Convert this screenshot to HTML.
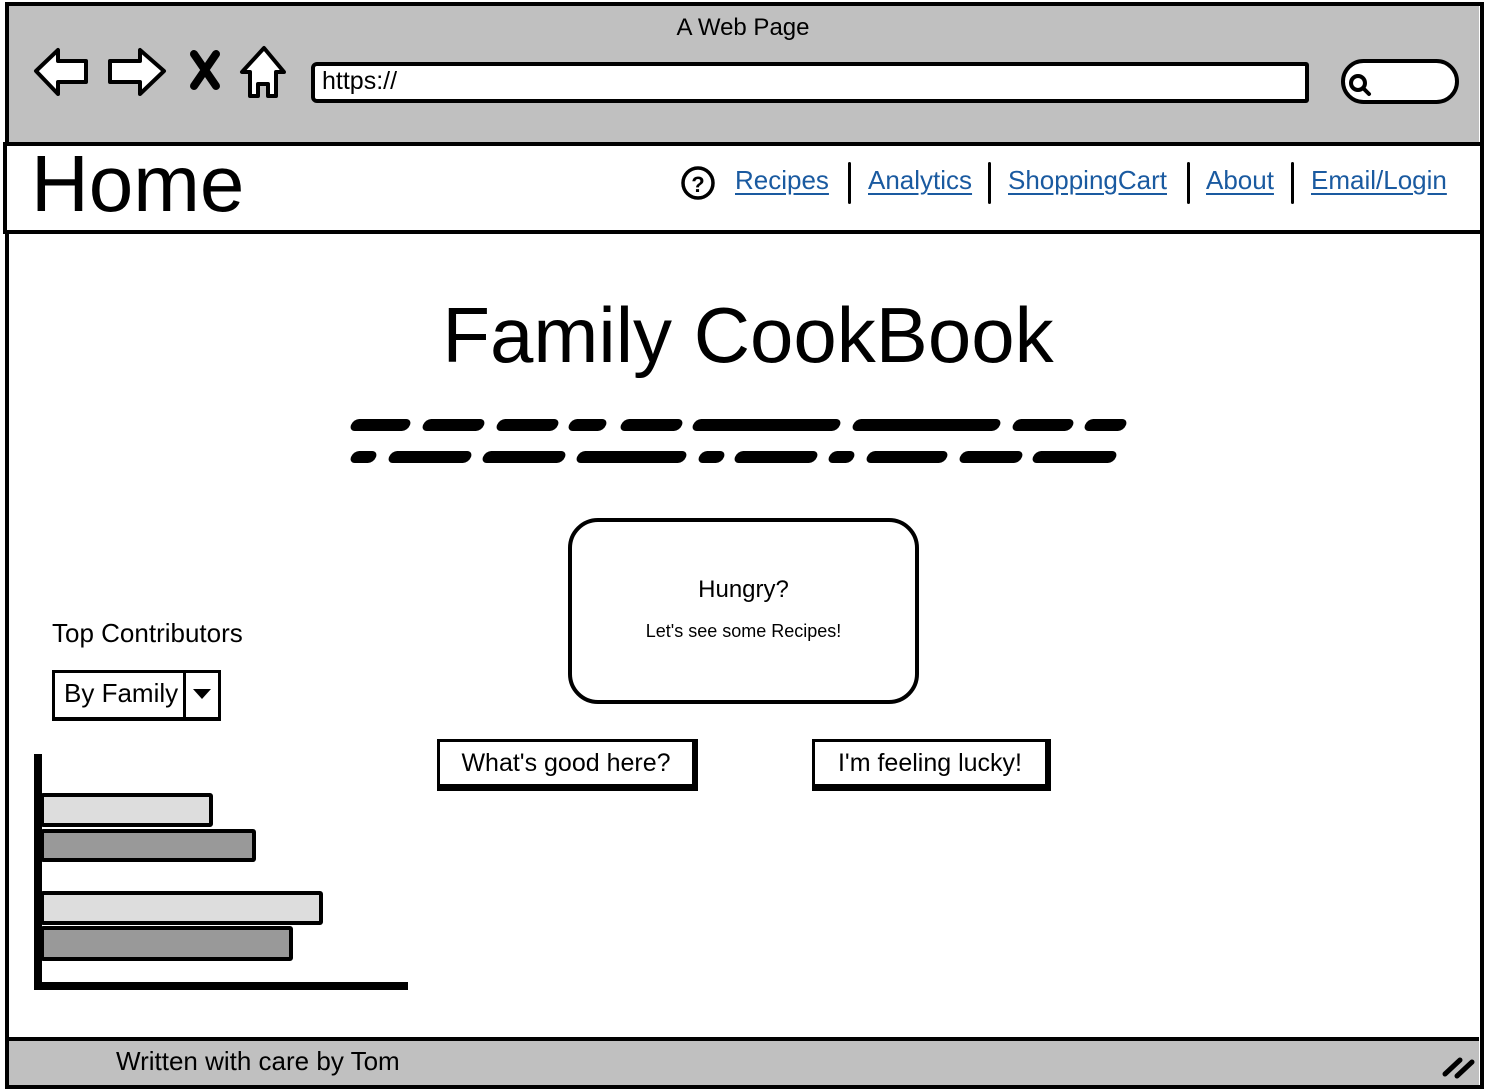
<!DOCTYPE html>
<html><head><meta charset="utf-8"><style>
*{margin:0;padding:0;box-sizing:border-box}
body{width:1486px;height:1092px;background:#fff;position:relative;overflow:hidden;font-family:"Liberation Sans",sans-serif;color:#000}
.a{position:absolute}
.lnk{position:absolute;top:165px;font-size:26px;color:#1a5aa0;text-decoration:underline;text-underline-offset:4px;white-space:nowrap}
.sep{position:absolute;top:162px;width:3px;height:42px;background:#000;border-radius:2px}
.sc{position:absolute;height:12px;background:#000;border-radius:6px;transform:skewX(-20deg)}
.bar{position:absolute;border:4px solid #000;border-radius:3px}
.btn{position:absolute;border:3px solid #000;border-right-width:6px;border-bottom-width:7px;background:#fff;font-size:25px;text-align:center;line-height:42px}
</style></head><body>
<div class="a" style="left:5px;top:2px;width:1479px;height:1087px;border:4px solid #000"></div>
<div class="a" style="left:9px;top:6px;width:1470px;height:136px;background:#c0c0c0"></div>
<div class="a" style="left:9px;top:1037px;width:1470px;height:48px;background:#c0c0c0;border-top:4px solid #000"></div>
<div class="a" style="left:0;top:14px;width:1486px;text-align:center;font-size:24px">A Web Page</div>
<svg class="a" style="left:30px;top:44px" width="260" height="60" viewBox="0 0 260 60">
<g stroke="#000" stroke-width="4" fill="#fff" stroke-linejoin="round">
<path d="M6 27 L28 6 L28 17 L56 17 L56 38 L28 38 L28 50 Z"/>
<path d="M134 27 L110 6 L110 17 L80 17 L80 38 L110 38 L110 50 Z"/>
<path d="M234 4 L212 28 L220 28 L220 52 L228 52 L228 40 L238 40 L238 52 L246 52 L246 28 L254 28 Z"/>
</g>
<path d="M164 10 L186 42 M186 10 L164 42" stroke="#000" stroke-width="8" stroke-linecap="round"/>
</svg>
<div class="a" style="left:311px;top:62px;width:998px;height:41px;background:#fff;border:4px solid #000;border-radius:6px 3px 3px 6px"></div>
<div class="a" style="left:322px;top:67px;font-size:25px">https://</div>
<div class="a" style="left:1341px;top:59px;width:118px;height:45px;background:#fff;border:4px solid #000;border-radius:24px"></div>
<svg class="a" style="left:1345px;top:70px" width="30" height="30"><circle cx="13" cy="13" r="7" stroke="#000" stroke-width="4" fill="none"/><path d="M18 18 L24 24" stroke="#000" stroke-width="4" stroke-linecap="round"/></svg>
<div class="a" style="left:3px;top:142px;width:1481px;height:92px;background:#fff;border:4px solid #000"></div>
<div class="a" style="left:31px;top:136px;font-size:80px;line-height:96px">Home</div>
<svg class="a" style="left:680px;top:165px" width="36" height="36"><circle cx="18" cy="18" r="15" stroke="#000" stroke-width="3.5" fill="none"/><text x="18" y="27" text-anchor="middle" font-family="Liberation Sans" font-weight="bold" font-size="22">?</text></svg>
<a class="lnk" style="left:735px">Recipes</a>
<div class="sep" style="left:848px"></div>
<a class="lnk" style="left:868px">Analytics</a>
<div class="sep" style="left:988px"></div>
<a class="lnk" style="left:1008px">ShoppingCart</a>
<div class="sep" style="left:1187px"></div>
<a class="lnk" style="left:1206px">About</a>
<div class="sep" style="left:1291px"></div>
<a class="lnk" style="left:1311px">Email/Login</a>
<div class="a" style="left:0;top:290px;width:1496px;text-align:center;font-size:78px">Family CookBook</div>
<div class="sc" style="left:351px;top:419px;width:59px"></div>
<div class="sc" style="left:423px;top:419px;width:61px"></div>
<div class="sc" style="left:497px;top:419px;width:61px"></div>
<div class="sc" style="left:569px;top:419px;width:37px"></div>
<div class="sc" style="left:621px;top:419px;width:61px"></div>
<div class="sc" style="left:693px;top:419px;width:147px"></div>
<div class="sc" style="left:853px;top:419px;width:147px"></div>
<div class="sc" style="left:1013px;top:419px;width:60px"></div>
<div class="sc" style="left:1085px;top:419px;width:41px"></div>
<div class="sc" style="left:351px;top:451px;width:25px"></div>
<div class="sc" style="left:389px;top:451px;width:82px"></div>
<div class="sc" style="left:483px;top:451px;width:82px"></div>
<div class="sc" style="left:577px;top:451px;width:109px"></div>
<div class="sc" style="left:699px;top:451px;width:25px"></div>
<div class="sc" style="left:735px;top:451px;width:82px"></div>
<div class="sc" style="left:829px;top:451px;width:25px"></div>
<div class="sc" style="left:867px;top:451px;width:80px"></div>
<div class="sc" style="left:960px;top:451px;width:62px"></div>
<div class="sc" style="left:1033px;top:451px;width:83px"></div>
<div class="a" style="left:568px;top:518px;width:351px;height:186px;border:4px solid #000;border-radius:30px"></div>
<div class="a" style="left:568px;top:576px;width:351px;text-align:center;font-size:24px">Hungry?</div>
<div class="a" style="left:568px;top:621px;width:351px;text-align:center;font-size:18px">Let's see some Recipes!</div>
<div class="btn" style="left:437px;top:739px;width:261px;height:52px">What's good here?</div>
<div class="btn" style="left:812px;top:739px;width:239px;height:52px">I'm feeling lucky!</div>
<div class="a" style="left:52px;top:618px;font-size:26px">Top Contributors</div>
<div class="a" style="left:52px;top:670px;width:169px;height:51px;border:3px solid #000;border-bottom-width:4px;background:#fff"></div>
<div class="a" style="left:64px;top:678px;font-size:26px">By Family</div>
<div class="a" style="left:183px;top:672px;width:3px;height:47px;background:#000"></div>
<svg class="a" style="left:192px;top:688px" width="20" height="12"><path d="M1 1 L19 1 L10 11 Z" fill="#000"/></svg>
<div class="a" style="left:34px;top:754px;width:8px;height:236px;background:#000"></div>
<div class="a" style="left:34px;top:982px;width:374px;height:8px;background:#000"></div>
<div class="bar" style="left:40px;top:793px;width:173px;height:34px;background:#ddd"></div>
<div class="bar" style="left:40px;top:829px;width:216px;height:33px;background:#999"></div>
<div class="bar" style="left:40px;top:891px;width:283px;height:34px;background:#ddd"></div>
<div class="bar" style="left:40px;top:926px;width:253px;height:35px;background:#999"></div>
<div class="a" style="left:116px;top:1046px;font-size:26px">Written with care by Tom</div>
<svg class="a" style="left:1440px;top:1052px" width="36" height="28"><path d="M5 22 L20 8 M17 24 L32 10" stroke="#000" stroke-width="5" stroke-linecap="round"/></svg>
</body></html>
